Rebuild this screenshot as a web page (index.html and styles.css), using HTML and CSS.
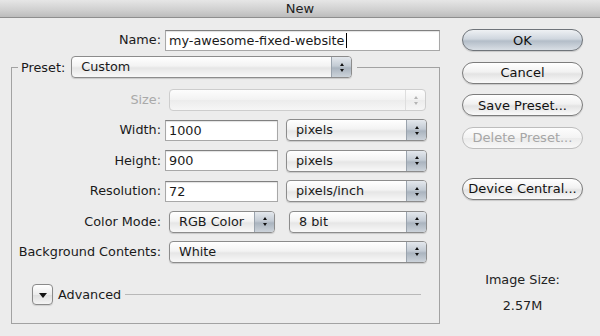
FILE: index.html
```html
<!DOCTYPE html>
<html lang="en">
<head>
    <meta charset="UTF-8">
    <title>New</title>
    <link rel="stylesheet" href="styles.css">
</head>
<body>
    <div class="window">
        <div class="titlebar">New</div>
        <div class="dialog">
            <div class="main">
                <div class="name-row">
                    <label class="lbl">Name:</label>
                    <div class="field name-field">my-awesome-fixed-website<span class="caret"></span></div>
                </div>

                <fieldset class="preset">
                    <legend>
                        <span class="legend-label">Preset:</span>
                        <div class="popup preset-popup"><span>Custom</span><i class="arrows"></i></div>
                    </legend>

                    <div class="form-grid">
                        <label class="lbl disabled">Size:</label>
                        <div class="ctrl">
                            <div class="popup disabled size-popup"><span></span><i class="arrows"></i></div>
                        </div>

                        <label class="lbl">Width:</label>
                        <div class="ctrl">
                            <div class="field num-field">1000</div>
                            <div class="popup unit-popup"><span>pixels</span><i class="arrows"></i></div>
                        </div>

                        <label class="lbl">Height:</label>
                        <div class="ctrl">
                            <div class="field num-field">900</div>
                            <div class="popup unit-popup"><span>pixels</span><i class="arrows"></i></div>
                        </div>

                        <label class="lbl">Resolution:</label>
                        <div class="ctrl">
                            <div class="field num-field">72</div>
                            <div class="popup unit-popup"><span>pixels/inch</span><i class="arrows"></i></div>
                        </div>

                        <label class="lbl">Color Mode:</label>
                        <div class="ctrl">
                            <div class="popup mode-popup"><span>RGB Color</span><i class="arrows"></i></div>
                            <div class="popup bits-popup"><span>8 bit</span><i class="arrows"></i></div>
                        </div>

                        <label class="lbl">Background Contents:</label>
                        <div class="ctrl">
                            <div class="popup bg-popup"><span>White</span><i class="arrows"></i></div>
                        </div>
                    </div>

                    <div class="advanced">
                        <div class="disclosure"><i></i></div>
                        <span class="advanced-label">Advanced</span>
                        <div class="advanced-line"></div>
                    </div>
                </fieldset>
            </div>

            <div class="side">
                <button class="btn default">OK</button>
                <button class="btn">Cancel</button>
                <button class="btn">Save Preset...</button>
                <button class="btn" disabled>Delete Preset...</button>
                <button class="btn device">Device Central...</button>

                <div class="image-size">
                    <div class="image-size-label">Image Size:</div>
                    <div class="image-size-value">2.57M</div>
                </div>
            </div>
        </div>
    </div>
</body>
</html>
```

FILE: styles.css
```css
body {
    margin: 0;
    background-color: #ececec;
    font-family: "DejaVu Sans", "Noto Sans", sans-serif;
    font-size: 12.8px;
    color: #1a1a1a;
}

.window {
    width: 600px;
    height: 336px;
    overflow: hidden;
    background-color: #ececec;
}

.titlebar {
    height: 17px;
    line-height: 17px;
    text-align: center;
    font-size: 13px;
    color: #222;
    background: linear-gradient(#e6e6e6, #cfcfcf 60%, #bcbcbc);
    border-bottom: 1px solid #8e8e8e;
}

.dialog {
    display: flex;
}

.main {
    width: 440px;
}

/* labels and text fields */

.lbl {
    text-align: right;
    line-height: 22px;
    white-space: nowrap;
}

.lbl.disabled {
    color: #a9a9a9;
}

.field {
    box-sizing: border-box;
    height: 21px;
    line-height: 19px;
    padding-left: 3px;
    background-color: #fff;
    border: 1px solid #a8a8a8;
    border-top-color: #808080;
    box-shadow: inset 0 1px 1px rgba(0, 0, 0, 0.12);
    white-space: nowrap;
}

.caret {
    display: inline-block;
    width: 1px;
    height: 15px;
    margin-left: 1px;
    vertical-align: -3px;
    background-color: #000;
}

.name-row {
    display: grid;
    grid-template-columns: 149px 275px;
    column-gap: 4px;
    align-items: center;
    margin-top: 11px;
    padding-left: 12px;
}

/* popup buttons */

.popup {
    box-sizing: border-box;
    display: flex;
    height: 22px;
    border: 1px solid #8c8c8c;
    border-radius: 4px;
    background: linear-gradient(#ffffff, #f3f3f3 45%, #e6e6e6 55%, #f8f8f8);
    box-shadow: 0 1px 1px rgba(0, 0, 0, 0.15);
    overflow: hidden;
}

.popup span {
    flex: 1;
    padding-left: 9px;
    line-height: 20px;
    white-space: nowrap;
}

.popup .arrows {
    display: flex;
    flex-direction: column;
    align-items: center;
    justify-content: center;
    gap: 3px;
    width: 19px;
    border-left: 1px solid #9aa3ad;
    background: linear-gradient(#e4e8ed, #c3cbd4 45%, #aab4bf 55%, #ccd3da);
}

.popup .arrows::before,
.popup .arrows::after {
    content: "";
    width: 0;
    height: 0;
    border-left: 2.5px solid transparent;
    border-right: 2.5px solid transparent;
}

.popup .arrows::before {
    border-bottom: 3px solid #111;
}

.popup .arrows::after {
    border-top: 3px solid #111;
}

.popup.disabled {
    border-color: #cdcdcd;
    background: linear-gradient(#fdfdfd, #f2f2f2 50%, #ececec 51%, #f6f6f6);
    box-shadow: none;
}

.popup.disabled .arrows {
    border-left-color: #dedede;
    background: transparent;
}

.popup.disabled .arrows::before {
    border-bottom-color: #b4b4b4;
}

.popup.disabled .arrows::after {
    border-top-color: #b4b4b4;
}

/* preset group */

.preset {
    box-sizing: border-box;
    width: 429px;
    margin: 5px 0 0 11px;
    padding: 0;
    border: 1px solid #a2a2a2;
}

.preset legend {
    display: flex;
    align-items: center;
    gap: 6px;
    margin-left: 6px;
    padding: 0 5px 0 3px;
}

.preset-popup {
    width: 281px;
}

.form-grid {
    display: grid;
    grid-template-columns: 149px 1fr;
    grid-auto-rows: 22px;
    column-gap: 4px;
    row-gap: 8.4px;
    margin-top: 11px;
}

.ctrl {
    display: flex;
    align-items: center;
}

.size-popup {
    width: 257px;
    margin-left: 4px;
}

.num-field {
    width: 113px;
}

.unit-popup {
    width: 141px;
    margin-left: 8px;
}

.mode-popup {
    width: 106px;
    margin-left: 4px;
}

.bits-popup {
    width: 138px;
    margin-left: 14px;
}

.bg-popup {
    width: 258px;
    margin-left: 4px;
}

/* advanced disclosure */

.advanced {
    display: flex;
    align-items: center;
    margin: 21px 18px 0 20px;
    padding-bottom: 18px;
}

.disclosure {
    box-sizing: border-box;
    display: flex;
    align-items: center;
    justify-content: center;
    width: 21px;
    height: 21px;
    border: 1px solid #8a8a8a;
    border-radius: 4px;
    background: linear-gradient(#ffffff, #ececec 50%, #dedede 51%, #f4f4f4);
    box-shadow: 0 1px 1px rgba(0, 0, 0, 0.12);
}

.disclosure i {
    width: 0;
    height: 0;
    margin-top: 2px;
    border-left: 4px solid transparent;
    border-right: 4px solid transparent;
    border-top: 5px solid #111;
}

.advanced-label {
    margin-left: 5px;
    margin-right: 4px;
}

.advanced-line {
    flex: 1;
    height: 1px;
    margin-top: 1px;
    background-color: #b8b8b8;
}

/* right column */

.side {
    display: flex;
    flex-direction: column;
    width: 121px;
    margin-left: 22px;
    padding-top: 11px;
    gap: 10.5px;
}

.btn {
    box-sizing: border-box;
    height: 22px;
    padding: 0;
    font-family: inherit;
    font-size: 13px;
    color: #111;
    border: 1px solid #7c7c7c;
    border-radius: 11px;
    background: linear-gradient(#ffffff, #f1f1f1 45%, #e3e3e3 55%, #fafafa);
    box-shadow: 0 1px 1px rgba(0, 0, 0, 0.15);
}

.btn.default {
    border-color: #6f747a;
    background: linear-gradient(#eef1f4, #cfd6de 45%, #b3bdc8 55%, #d9dfe5);
}

.btn:disabled {
    color: #a6a6a6;
    border-color: #bdbdbd;
    box-shadow: none;
    background: linear-gradient(#fdfdfd, #f3f3f3 50%, #ebebeb 51%, #f7f7f7);
}

.btn.device {
    margin-top: 18.5px;
}

.image-size {
    margin-top: 62px;
    text-align: center;
    color: #222;
}

.image-size-value {
    margin-top: 11px;
}
```
